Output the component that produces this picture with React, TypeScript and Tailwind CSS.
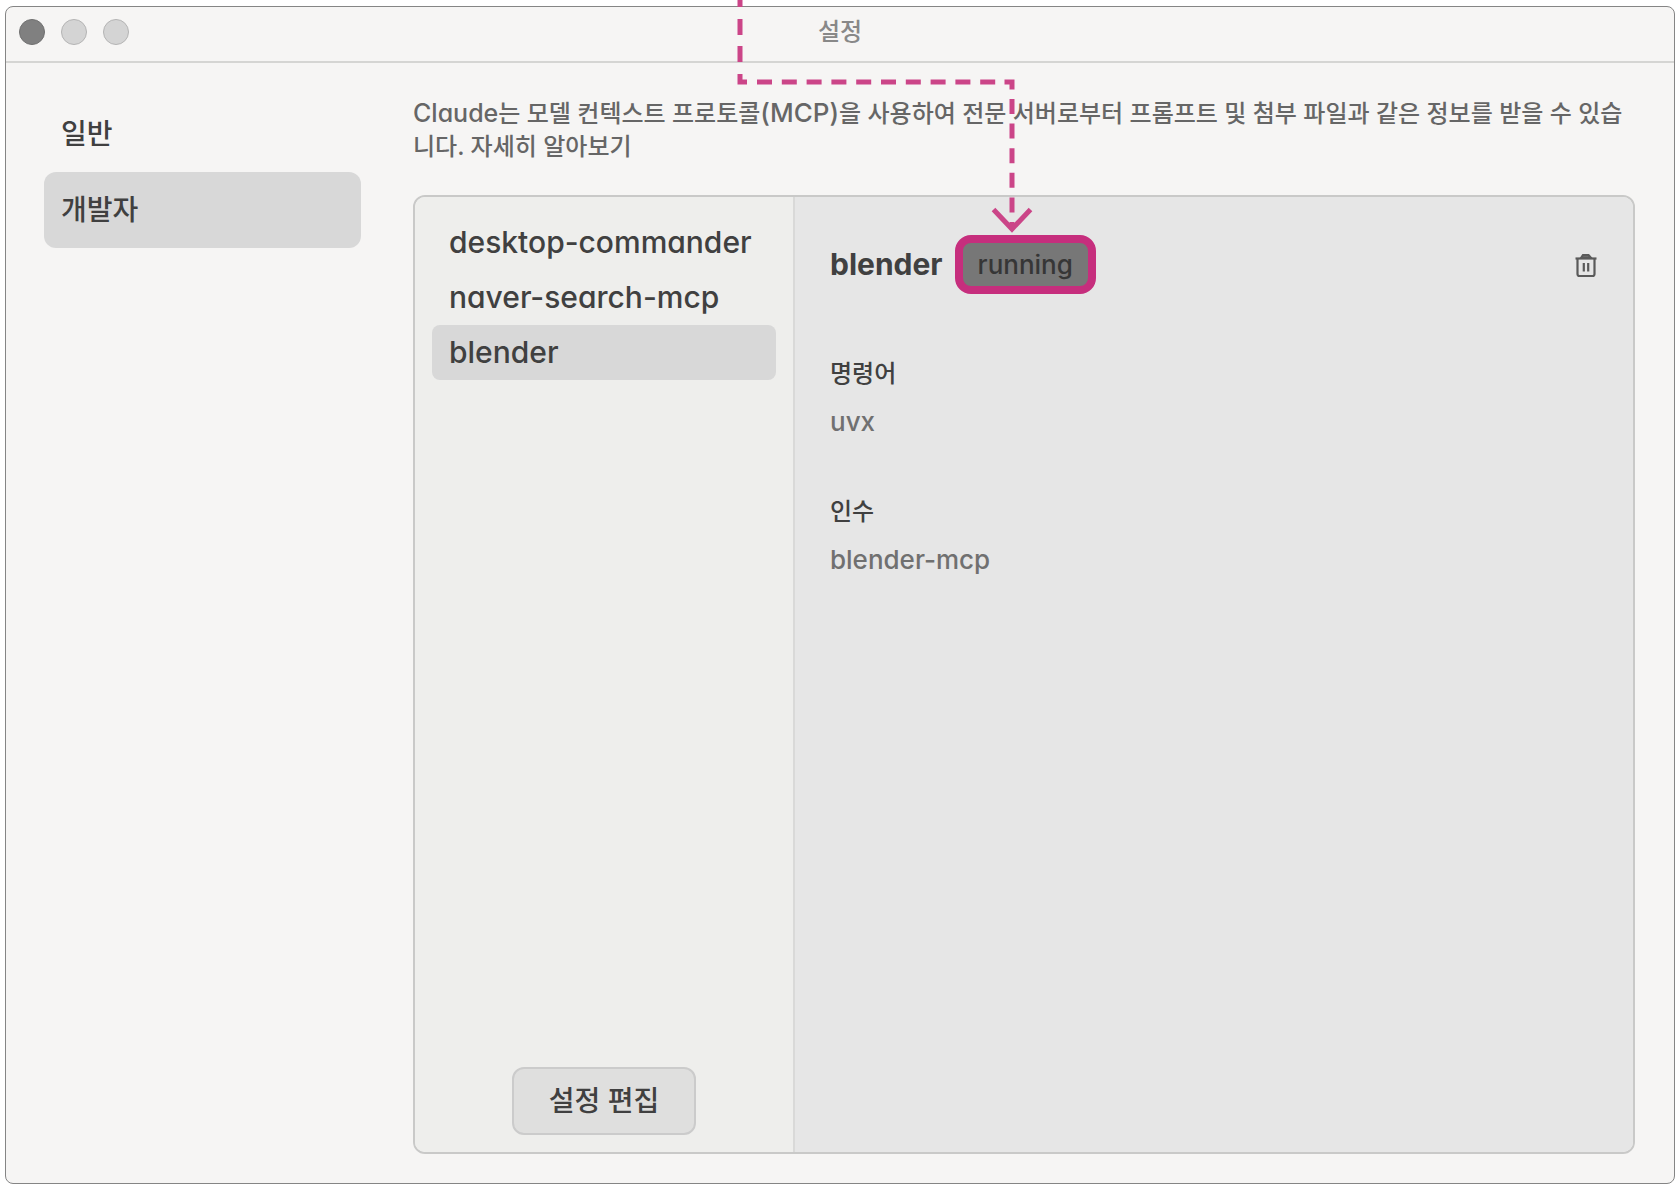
import { useState } from "react";

const menu = ["일반", "개발자"];

const servers = [
    { name: "desktop-commander", command: "npx", args: "desktop-commander" },
    { name: "naver-search-mcp", command: "npx", args: "naver-search-mcp" },
    { name: "blender", command: "uvx", args: "blender-mcp" },
];

function TrashIcon() {
    return (
        <svg className="h-7 w-6" viewBox="0 0 24 28" fill="none" stroke="#5a5a5a" strokeWidth="2.200">
            <path d="M1.500 7.500H22.500" />
            <path d="M7 7L9 4H14.500L17 7Z" fill="#6a6a6a" />
            <path d="M3.500 7.500V23Q3.500 25 5.500 25H18.500Q20.500 25 20.500 23V7.500" />
            <path d="M9.800 12V20.500M14.200 12V20.500" />
        </svg>
    );
}

// dashed guide that runs down to the status badge
function Pointer() {
    return (
        <svg className="pointer-events-none absolute top-0 left-[730px] h-[240px] w-[310px]" viewBox="730 0 310 240" fill="none" stroke="#cb4588" strokeWidth="5">
            <path d="M740 0V7M740 19V35M740 46V62M740 74V82H747" />
            <path d="M757 82H1000" strokeDasharray="15 9.800" />
            <path d="M1004.500 82H1012V89.500" />
            <path d="M1012 99V213" strokeDasharray="15 9.600" />
            <path d="M993.500 209.500L1012 229L1030.500 209.500" />
            <path d="M1009.500 222H1014.500V228H1009.500Z" fill="#cb4588" stroke="none" />
        </svg>
    );
}

export default function App() {
    const [page, setPage] = useState("개발자");
    const [selected, setSelected] = useState("blender");
    const server = servers.find((s) => s.name === selected) ?? servers[2];

    return (
        <div className="relative flex min-h-screen flex-col bg-white px-[5px] py-1.5 font-['Inter','Noto_Sans_CJK_KR',sans-serif] font-medium text-[#404040] [font-feature-settings:'cv11']">
            <div className="flex grow flex-col rounded-lg border border-[#858585] bg-[#f6f5f4]">
                <header className="grid h-14 grid-cols-3 items-center border-b-2 border-[#d5d5d3] px-[13px] pb-1">
                    <div className="flex gap-4">
                        <button aria-label="닫기" className="size-[26px] rounded-full border border-[#707070] bg-[#808080]" />
                        <button aria-label="최소화" className="size-[26px] rounded-full border border-[#b4b4b4] bg-[#d4d4d4]" />
                        <button aria-label="확대" className="size-[26px] rounded-full border border-[#b4b4b4] bg-[#d4d4d4]" />
                    </div>
                    <h1 className="text-center text-2xl text-[#888888]">설정</h1>
                </header>

                <div className="flex grow pt-[33px] pr-[39px] pb-[29px] pl-[38px]">
                    <nav className="flex w-[317px] shrink-0 flex-col">
                        {menu.map((item) => (
                            <button
                                key={item}
                                onClick={() => setPage(item)}
                                className={`h-[76px] rounded-xl px-[17px] text-left text-[28px] ${page === item ? "bg-[#d8d8d8]" : ""}`}
                            >
                                {item}
                            </button>
                        ))}
                    </nav>

                    <main className="ml-[52px] flex min-w-0 grow flex-col">
                        <p className="text-2xl leading-[33px] text-[#666666]">
                            <span className="text-[25px]">Claude</span>는 모델 컨텍스트 프로토콜
                            <span className="text-[26px]">(MCP)</span>을 사용하여 전문 서버로부터 프롬프트 및 첨부 파일과 같은 정보를 받을 수 있습니다.{" "}
                            <a href="#">자세히 알아보기</a>
                        </p>

                        <div className="mt-8 flex grow overflow-hidden rounded-xl border-2 border-[#c9c9c8]">
                            <div className="flex w-[380px] shrink-0 flex-col border-r-2 border-[#d9d9d8] bg-[#eeeeec] px-[17px] pt-[18px] pb-[17px]">
                                {servers.map((s) => (
                                    <button
                                        key={s.name}
                                        onClick={() => setSelected(s.name)}
                                        className={`h-[55px] rounded-lg px-[17px] text-left text-[30px] ${selected === s.name ? "bg-[#d8d8d8]" : ""}`}
                                    >
                                        {s.name}
                                    </button>
                                ))}
                                <button className="mt-auto h-[68px] w-[184px] self-center rounded-xl border-2 border-[#cbcbcb] bg-[#dfdfde] text-[28px]">
                                    설정 편집
                                </button>
                            </div>

                            <section className="grow bg-[#e6e6e6] py-[38px] pr-[35px] pl-[35px]">
                                <div className="flex items-center">
                                    <h2 className="text-[30px] font-bold">{server.name}</h2>
                                    <span className="ml-3 flex h-[59px] items-center rounded-2xl border-8 border-[#c62e7d] bg-[#777777] px-[15px] text-[26px] text-[#363636]">
                                        running
                                    </span>
                                    <button aria-label="삭제" className="ml-auto">
                                        <TrashIcon />
                                    </button>
                                </div>
                                <dl className="mt-[58px]">
                                    <dt className="text-2xl leading-[44px]">명령어</dt>
                                    <dd className="text-[26px] leading-[52px] text-[#707070]">{server.command}</dd>
                                    <dt className="mt-[42px] text-2xl leading-[44px]">인수</dt>
                                    <dd className="text-[26px] leading-[52px] text-[#707070]">{server.args}</dd>
                                </dl>
                            </section>
                        </div>
                    </main>
                </div>
            </div>
            <Pointer />
        </div>
    );
}
